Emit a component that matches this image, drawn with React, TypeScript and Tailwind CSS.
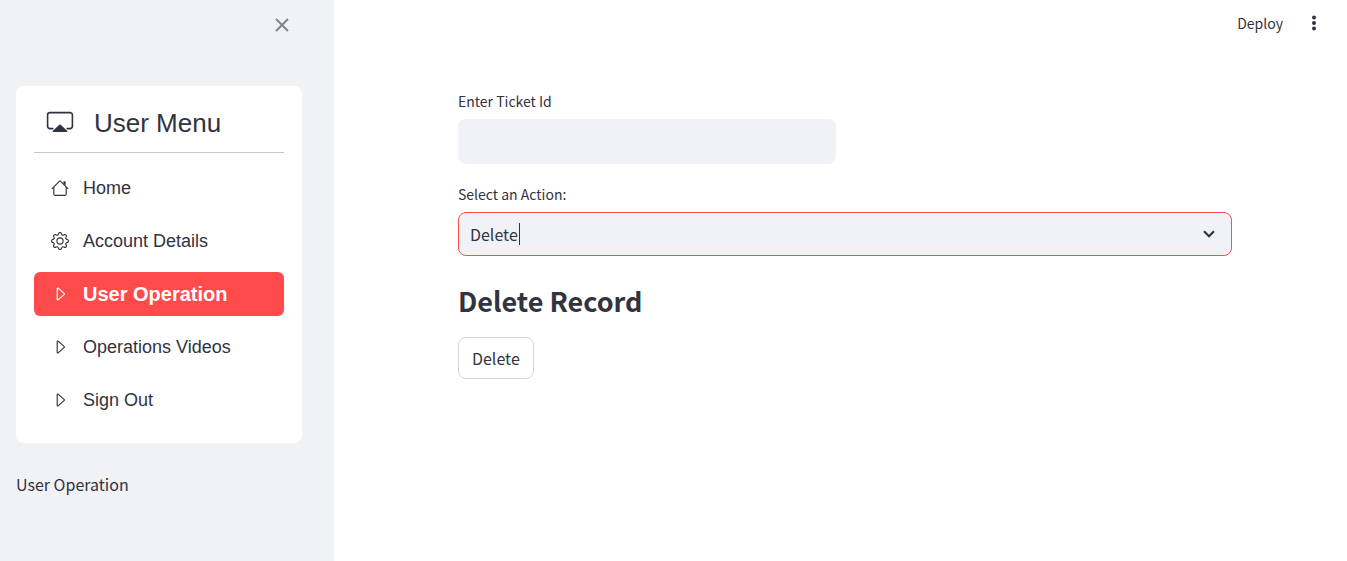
import { useState } from "react";
import type { ReactNode } from "react";
import { BsCaretRight, BsGear } from "react-icons/bs";

function AirplayIcon() {
  return (
    <svg viewBox="0 0 28 28" width="28" height="28" fill="none" aria-hidden="true">
      <path
        d="M7.4 19.6H4a2.4 2.4 0 0 1-2.4-2.4V6A2.4 2.4 0 0 1 4 3.6h20A2.4 2.4 0 0 1 26.4 6v11.2a2.4 2.4 0 0 1-2.4 2.4h-3.4"
        stroke="currentColor"
        strokeWidth="1.6"
      />
      <path d="M13.3 15.8a1 1 0 0 1 1.4 0l6.4 6c.5.5.2 1.3-.6 1.3h-13c-.8 0-1.1-.8-.6-1.3z" fill="currentColor" />
    </svg>
  );
}

function HouseIcon() {
  return (
    <svg viewBox="0 0 16 16" width="18" height="18" fill="currentColor" aria-hidden="true">
      <path
        fillRule="evenodd"
        d="M2 13.5V7h1v6.5a.5.5 0 0 0 .5.5h9a.5.5 0 0 0 .5-.5V7h1v6.5a1.5 1.5 0 0 1-1.5 1.5h-9A1.5 1.5 0 0 1 2 13.5zm11-11V6l-2-2V2.5a.5.5 0 0 1 .5-.5h1a.5.5 0 0 1 .5.5z"
      />
      <path
        fillRule="evenodd"
        d="M7.293 1.5a1 1 0 0 1 1.414 0l6.647 6.646a.5.5 0 0 1-.708.708L8 2.207 1.354 8.854a.5.5 0 1 1-.708-.708L7.293 1.5z"
      />
    </svg>
  );
}

const items: { label: string; icon: ReactNode }[] = [
  { label: "Home", icon: <HouseIcon /> },
  { label: "Account Details", icon: <BsGear size={18} /> },
  { label: "User Operation", icon: <BsCaretRight size={18} /> },
  { label: "Operations Videos", icon: <BsCaretRight size={18} /> },
  { label: "Sign Out", icon: <BsCaretRight size={18} /> },
];

function Sidebar() {
  const [active, setActive] = useState("User Operation");
  return (
    <aside className="w-[334px] shrink-0 bg-[#f0f2f6] pr-8 pl-4">
      <div className="flex h-[86px] items-start justify-end pt-4">
        <button type="button" aria-label="Close sidebar" className="flex h-[18px] w-10 items-center justify-center text-[#808495]">
          <svg viewBox="0 0 14 14" width="14" height="14" fill="none" stroke="currentColor" strokeWidth="2" aria-hidden="true">
            <path d="M1 1l12 12M13 1L1 13" />
          </svg>
        </button>
      </div>
      <nav className="rounded-lg bg-white px-[18px] pb-[21px] font-['Liberation_Sans',Arial,sans-serif]">
        <h2 className="flex h-[67px] items-center gap-5 border-b border-[#c6c7ca] pt-2 pl-3 text-[26px]">
          <AirplayIcon />
          User Menu
        </h2>
        <ul className="flex flex-col gap-[9px] pt-[13px]">
          {items.map((item) => (
            <li key={item.label}>
              <a
                href="#"
                onClick={(e) => {
                  e.preventDefault();
                  setActive(item.label);
                }}
                className={
                  item.label === active
                    ? "flex h-11 items-center gap-[14px] rounded-md bg-[#ff4b4b] pl-[17px] text-[20px] font-black text-white"
                    : "flex h-11 items-center gap-[14px] rounded-md pl-[17px] text-[18px]"
                }
              >
                {item.icon}
                {item.label}
              </a>
            </li>
          ))}
        </ul>
      </nav>
      <p className="pt-7 text-[16px] leading-[26px]">{active}</p>
    </aside>
  );
}

export default function App() {
  const [ticket, setTicket] = useState("");
  const [action, setAction] = useState("Delete");
  return (
    <div className="flex min-h-screen bg-white font-['Noto_Sans_CJK_SC',sans-serif] text-[#31333f]">
      <Sidebar />
      <div className="min-w-0 flex-1">
        <header className="flex h-[46px] items-center justify-end gap-[22px] pr-6 text-[14px]">
          <button type="button">Deploy</button>
          <button type="button" aria-label="Main menu">
            <svg viewBox="0 0 18 18" width="18" height="18" fill="currentColor" aria-hidden="true">
              <circle cx="9" cy="3.5" r="2" />
              <circle cx="9" cy="9" r="2" />
              <circle cx="9" cy="14.5" r="2" />
            </svg>
          </button>
        </header>
        <main className="pt-11 pr-[115px] pl-[124px]">
          <div className="grid grid-cols-2 gap-[18px]">
            <div>
              <label htmlFor="ticket" className="block h-[29px] text-[14px] leading-[22px]">
                Enter Ticket Id
              </label>
              <input
                id="ticket"
                value={ticket}
                onChange={(e) => setTicket(e.target.value)}
                className="block h-[45px] w-full rounded-lg bg-[#f0f2f6] px-3 text-[16px] outline-none"
              />
            </div>
          </div>
          <label htmlFor="action" className="mt-[19px] block h-[29px] text-[14px] leading-[22px]">
            Select an Action:
          </label>
          <div className="relative">
            <select
              id="action"
              value={action}
              onChange={(e) => setAction(e.target.value)}
              className="block h-11 w-full appearance-none rounded-lg border border-[#ff4b4b] bg-[#f0f2f6] px-[11px] text-[16px] outline-none"
            >
              <option>Delete</option>
              <option>Update</option>
            </select>
            <span className="pointer-events-none absolute top-[11px] left-[61px] h-[22px] w-px bg-[#31333f]" />
            <svg
              viewBox="0 0 12 8"
              width="12"
              height="8"
              fill="none"
              stroke="currentColor"
              strokeWidth="2.2"
              className="pointer-events-none absolute top-[18px] right-[17px]"
              aria-hidden="true"
            >
              <path d="M1 1.2l5 5 5-5" />
            </svg>
          </div>
          <h3 className="mt-[23px] text-[27px] leading-[44px] font-semibold">Delete Record</h3>
          <button type="button" className="mt-[14px] h-[42px] rounded-lg border border-[#d6d6d9] px-[13px] text-[16px]">
            Delete
          </button>
        </main>
      </div>
    </div>
  );
}
